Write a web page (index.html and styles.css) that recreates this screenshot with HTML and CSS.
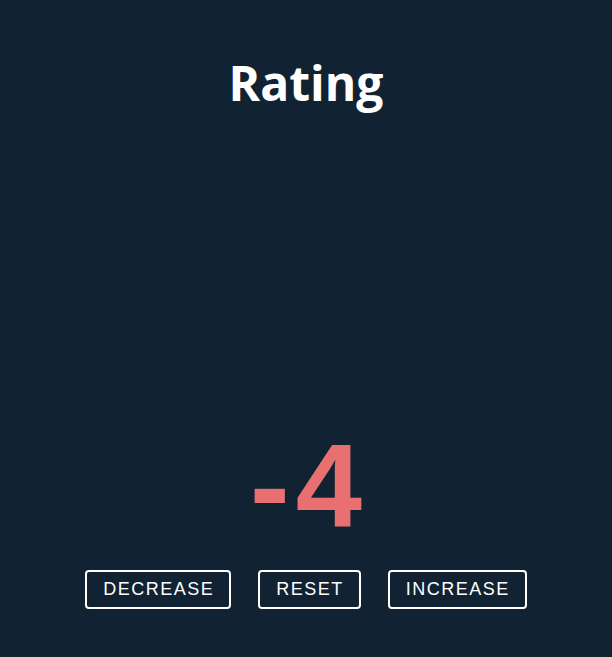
FILE: index.html
```html
<!DOCTYPE html>
<html lang="en">
<head>
<meta charset="utf-8">
<title>Rating</title>
<link rel="stylesheet" href="styles.css">
</head>
<body>
<main class="app">
  <h1 class="title">Rating</h1>
  <div class="spacer"></div>
  <div class="value">-4</div>
  <div class="controls">
    <button class="btn" type="button">DECREASE</button>
    <button class="btn" type="button">RESET</button>
    <button class="btn" type="button">INCREASE</button>
  </div>
</main>
</body>
</html>
```

FILE: styles.css
```css
html, body {
  margin: 0;
  padding: 0;
  height: 100%;
  background: #112233;
}
.app {
  height: 657px;
  display: flex;
  flex-direction: column;
  align-items: center;
  box-sizing: border-box;
  padding-top: 53px;
}
.title {
  margin: 0;
  font-family: "Open Sans", "Noto Sans", sans-serif;
  font-weight: 700;
  font-size: 48px;
  line-height: 60px;
  color: #ffffff;
}
.spacer {
  flex: 1;
}
.value {
  font-family: "Liberation Sans", Arial, sans-serif;
  font-weight: 700;
  font-size: 119px;
  line-height: 120px;
  letter-spacing: 6px;
  padding-left: 6px;
  color: #e87070;
}
.controls {
  display: flex;
  gap: 27px;
  margin-top: 24px;
  margin-bottom: 48px;
}
.btn {
  font-family: "Liberation Sans", Arial, sans-serif;
  font-size: 18px;
  letter-spacing: 1.5px;
  line-height: 21px;
  color: #ffffff;
  background: transparent;
  border: 2px solid #ffffff;
  border-radius: 4px;
  padding: 7px 15px 7px 16px;
  cursor: pointer;
}
```
